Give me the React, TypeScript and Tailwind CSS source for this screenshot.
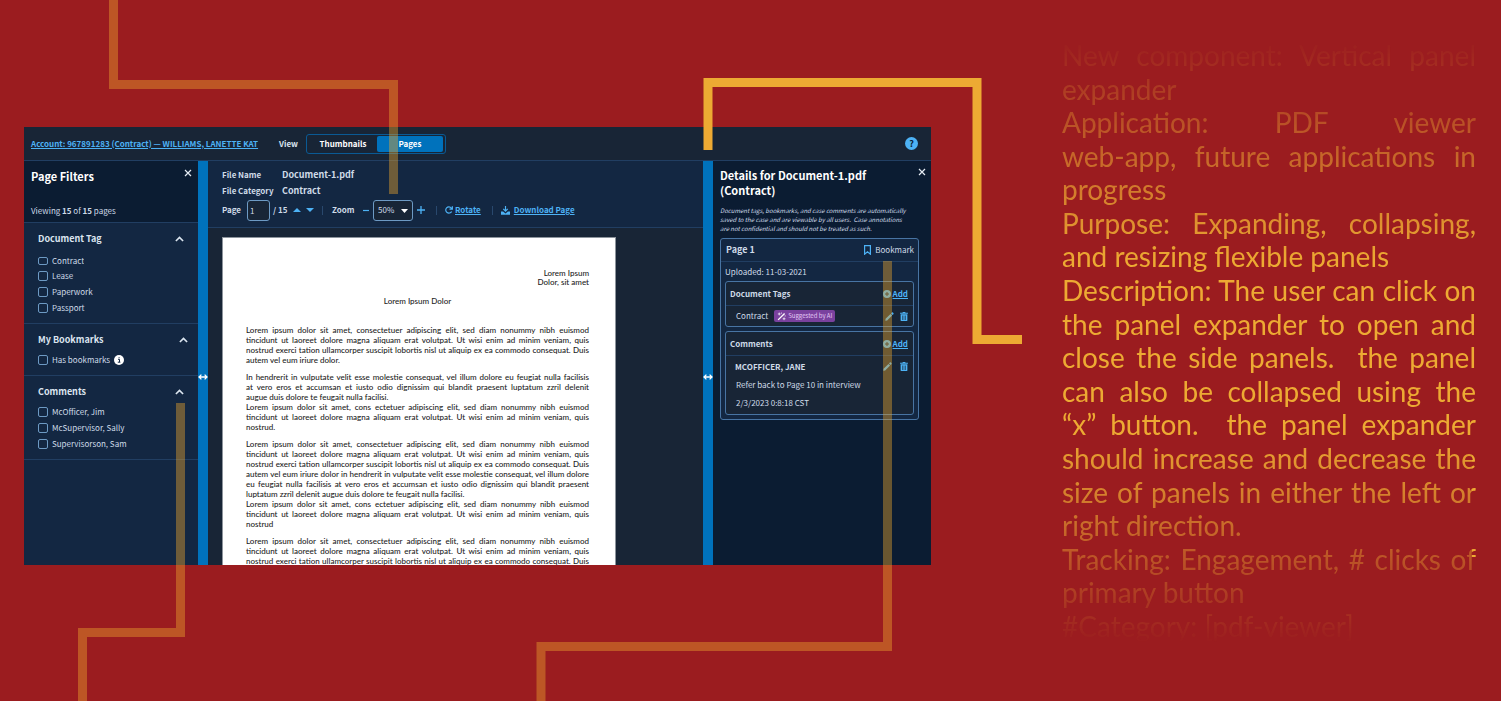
import { ReactNode } from "react";

const uiFont = "font-['Noto_Sans_CJK_SC','Noto_Sans',sans-serif]";
const copyFont = "font-['Lato',sans-serif]";

function Chevron() {
  return (
    <svg viewBox="0 0 10 6" className="h-[6px] w-[9px]" fill="none" stroke="#dce6f0" strokeWidth="1.8">
      <path d="M1 5.2 5 1.2 9 5.2" />
    </svg>
  );
}

function Close({ label }: { label: string }) {
  return (
    <button aria-label={label} className="flex size-[8px] items-center justify-center">
      <svg viewBox="0 0 8 8" className="size-[8px]" fill="none" stroke="#e6edf5" strokeWidth="1.2">
        <path d="M1 1 7 7M7 1 1 7" />
      </svg>
    </button>
  );
}

function Check({ label, children }: { label: string; children?: ReactNode }) {
  return (
    <label className="flex h-4 items-center gap-1 text-[8px] leading-4 text-[#cfdbe8]">
      <input type="checkbox" className="size-[10px] shrink-0 appearance-none rounded-[2px] border border-[#6d9ac4]" />
      {label}
      {children}
    </label>
  );
}

function FilterGroup({ title, inset, children }: { title: string; inset?: boolean; children: ReactNode }) {
  return (
    <section className="border-b border-[#213e62] pr-[10px] pb-[7px] pl-[14px]">
      <button className={`flex h-[32px] w-full items-center justify-between text-[9px] font-bold text-[#dbe5f0] ${inset ? "" : "pr-1"}`}>
        {title}
        <Chevron />
      </button>
      {children}
    </section>
  );
}

function Divider({ bar }: { bar: string }) {
  return (
    <button aria-label={bar} className="flex w-[10px] shrink-0 cursor-col-resize items-center justify-center bg-[#0072bc] pt-7">
      <svg viewBox="0 0 10 8" className="h-[8px] w-[10px]" fill="none" stroke="#fff" strokeWidth="1.3">
        <path d="M1.2 4H8.8M3.4 1.6 1 4 3.4 6.4M6.6 1.6 9 4 6.6 6.4" />
      </svg>
    </button>
  );
}

function Pencil() {
  return (
    <button aria-label="Edit">
      <svg viewBox="0 0 16 16" className="size-[9px]" fill="#4db2f5">
        <path d="M1 12.2 9.8 3.4 12.6 6.2 3.8 15 .6 15.4zM10.7 2.5l1.4-1.4a1.4 1.4 0 0 1 2 0l.8.8a1.4 1.4 0 0 1 0 2l-1.4 1.4z" />
      </svg>
    </button>
  );
}

function Trash() {
  return (
    <button aria-label="Delete">
      <svg viewBox="0 0 14 16" className="h-[9px] w-[8px]" fill="#4db2f5">
        <path
          fillRule="evenodd"
          d="M5 0h4l.8 1.3H14v1.9H0V1.3h4.2zM1 4.2h12V14.500a1.500 1.500 0 0 1-1.500 1.500h-9A1.500 1.500 0 0 1 1 14.500zM3.700 6v8h1V6zM6.500 6v8h1V6zM9.300 6v8h1V6z"
        />
      </svg>
    </button>
  );
}

function AddLink() {
  return (
    <a href="#add" className="flex items-center gap-[2px] text-[8px] font-bold text-[#4db2f5]">
      <svg viewBox="0 0 16 16" className="size-[8px]">
        <circle cx="8" cy="8" r="8" fill="#4db2f5" />
        <path d="M8 4v8M4 8h8" stroke="#182536" strokeWidth="2" />
      </svg>
      <span className="underline">Add</span>
    </a>
  );
}

function Card({ title, children }: { title: string; children: ReactNode }) {
  return (
    <section className="rounded-[3px] border border-[#4874a3] bg-[#182536]">
      <div className="flex h-6 items-center justify-between border-b border-[#213e62] pr-[5px] pl-1">
        <h4 className="text-[8px] font-bold">{title}</h4>
        <AddLink />
      </div>
      {children}
    </section>
  );
}

const j = true;
type Line = [string, boolean?];

const opening: Line[] = [
  ["Lorem ipsum dolor sit amet, consectetuer adipiscing elit, sed diam nonummy nibh euismod", j],
  ["tincidunt ut laoreet dolore magna aliquam erat volutpat. Ut wisi enim ad minim veniam, quis", j],
  ["nostrud exerci tation ullamcorper suscipit lobortis nisl ut aliquip ex ea commodo consequat. Duis", j],
];
const repeat: Line[] = [
  ["Lorem ipsum dolor sit amet, cons ectetuer adipiscing elit, sed diam nonummy nibh euismod", j],
  ["tincidunt ut laoreet dolore magna aliquam erat volutpat. Ut wisi enim ad minim veniam, quis", j],
];
const paragraphs: Line[][] = [
  [...opening, ["autem vel eum iriure dolor."]],
  [
    ["In hendrerit in vulputate velit esse molestie consequat, vel illum dolore eu feugiat nulla facilisis", j],
    ["at vero eros et accumsan et iusto odio dignissim qui blandit praesent luptatum zzril delenit", j],
    ["augue duis dolore te feugait nulla facilisi."],
    ...repeat,
    ["nostrud."],
  ],
  [
    ...opening,
    ["autem vel eum iriure dolor in hendrerit in vulputate velit esse molestie consequat, vel illum dolore", j],
    ["eu feugiat nulla facilisis at vero eros et accumsan et iusto odio dignissim qui blandit praesent", j],
    ["luptatum zzril delenit augue duis dolore te feugait nulla facilisi."],
    ...repeat,
    ["nostrud"],
  ],
  opening,
];

const notes: Line[] = [
  ["New component: Vertical panel", j],
  ["expander"],
  ["Application: PDF viewer", j],
  ["web-app, future applications in", j],
  ["progress"],
  ["Purpose: Expanding, collapsing,", j],
  ["and resizing flexible panels"],
  ["Description: The user can click on", j],
  ["the panel expander to open and", j],
  ["close the side panels.\u00a0 the panel", j],
  ["can also be collapsed using the", j],
  ["“x” button.\u00a0 the panel expander", j],
  ["should increase and decrease the", j],
  ["size of panels in either the left or", j],
  ["right direction."],
  ["Tracking: Engagement, # clicks of", j],
  ["primary button"],
  ["#Category: [pdf-viewer]"],
];

function TextLine({ line }: { line: Line }) {
  return <span className={`block whitespace-nowrap ${line[1] ? "[text-align-last:justify]" : ""}`}>{line[0]}</span>;
}

function Filters() {
  return (
    <aside className="w-[174px] shrink-0 bg-[#132742]">
      <header className="h-[62px] border-b border-[#213e62] bg-[#0b1c32] pr-[6px] pl-[7px]">
        <div className="flex h-[42px] items-start justify-between pt-2">
          <h2 className="text-[11px] leading-[15px] font-bold text-white">Page Filters</h2>
          <Close label="Close page filters" />
        </div>
        <p className="text-[8px] leading-4 text-[#cfdbe8]">
          Viewing <b>15</b> of <b>15</b> pages
        </p>
      </header>
      <FilterGroup title="Document Tag">
        <label className="mt-[2px] mb-[3px] flex h-2 items-center gap-1 text-[8px] leading-[6px] text-[#cfdbe8]">
          <input type="checkbox" className="h-2 w-[10px] appearance-none rounded-[2px] border border-[#6d9ac4]" />
          <span className="h-[6px] overflow-hidden">Contract</span>
        </label>
        <Check label="Lease" />
        <Check label="Paperwork" />
        <Check label="Passport" />
      </FilterGroup>
      <FilterGroup title="My Bookmarks" inset>
        <div className="-mt-1">
          <Check label="Has bookmarks">
            <svg viewBox="0 0 10 10" className="size-[10px]">
              <circle cx="5" cy="5" r="5" fill="#fff" />
              <path d="M4 4.300h1.500V7M3.800 7.200h2.600M4.600 2.700h1" stroke="#132742" strokeWidth="1" fill="none" />
            </svg>
          </Check>
        </div>
      </FilterGroup>
      <FilterGroup title="Comments">
        <div className="-mt-1">
          <Check label="McOfficer, Jim" />
          <Check label="McSupervisor, Sally" />
          <Check label="Supervisorson, Sam" />
        </div>
      </FilterGroup>
    </aside>
  );
}

function Toolbar() {
  return (
    <div className="h-[67px] border-b border-[#213e62] bg-[#132742] px-[14px] pt-[6px] text-[8px] font-bold text-[#cfdbe8]">
      <dl className="grid grid-cols-[60px_1fr] items-center leading-4">
        <dt>File Name</dt>
        <dd className="text-[9px]">Document-1.pdf</dd>
        <dt>File Category</dt>
        <dd className="text-[9px]">Contract</dd>
      </dl>
      <div className="flex h-[22px] items-center">
        <label htmlFor="page" className="w-[25px]">
          Page
        </label>
        <input
          id="page"
          defaultValue="1"
          className="h-[21px] w-[23px] rounded-[3px] border border-[#6d9ac4] bg-[#182536] pl-[2px] font-normal"
        />
        <span className="ml-[3px] w-[20px]">/ 15</span>
        <button aria-label="Previous page">
          <svg viewBox="0 0 8 4" className="h-1 w-2" fill="#4db2f5">
            <path d="M0 4 4 0 8 4z" />
          </svg>
        </button>
        <button aria-label="Next page" className="ml-[5px]">
          <svg viewBox="0 0 8 4" className="h-1 w-2" fill="#4db2f5">
            <path d="M0 0 4 4 8 0z" />
          </svg>
        </button>
        <span className="ml-2 h-[9px] w-px bg-[#29486d]" />
        <label htmlFor="zoom" className="ml-[9px] w-[31px]">
          Zoom
        </label>
        <button aria-label="Zoom out" className="flex h-4 w-[7px] items-center">
          <svg viewBox="0 0 7 7" className="size-[7px]" stroke="#4db2f5" strokeWidth="1.2">
            <path d="M0 3.500h6" />
          </svg>
        </button>
        <div className="relative ml-[3px]">
          <select
            id="zoom"
            className="block h-[21px] w-[40px] appearance-none rounded-[3px] border border-[#6d9ac4] bg-[#182536] pl-[4px] font-normal"
          >
            <option>50%</option>
            <option>100%</option>
          </select>
          <svg viewBox="0 0 7 4" className="pointer-events-none absolute top-[9px] right-[5px] h-1 w-[7px]" fill="#fff">
            <path d="M0 0 3.500 4 7 0z" />
          </svg>
        </div>
        <button aria-label="Zoom in" className="ml-[4px]">
          <svg viewBox="0 0 8 8" className="size-2" stroke="#4db2f5" strokeWidth="1.300">
            <path d="M0 4h8M4 0v8" />
          </svg>
        </button>
        <span className="ml-[11px] h-[9px] w-px bg-[#29486d]" />
        <button className="ml-[8px] flex items-center gap-[2px] text-[#4db2f5]">
          <svg viewBox="0 0 10 10" className="size-[8px]" fill="none" stroke="#4db2f5" strokeWidth="1.500">
            <path d="M8.300 6.800A3.900 3.900 0 1 1 7.900 2.600L9 3.800M9.200.4v3.600H5.600" />
          </svg>
          <span className="underline">Rotate</span>
        </button>
        <span className="ml-[11px] h-[9px] w-px bg-[#29486d]" />
        <a href="#download" className="ml-[8px] flex items-center gap-[4px] text-[#4db2f5]">
          <svg viewBox="0 0 10 10" className="size-[9px]">
            <path d="M5 0v5.500M2.500 3.200 5 5.700 7.500 3.200" fill="none" stroke="#4db2f5" strokeWidth="1.300" />
            <path d="M0 6h2.300L5 8.400 7.700 6H10v3.800H0z" fill="#4db2f5" />
          </svg>
          <span className="underline">Download Page</span>
        </a>
      </div>
    </div>
  );
}

function Details() {
  return (
    <aside className="w-[218px] shrink-0 bg-[#0b1c32] pr-[12px] pl-[7px] text-[#cfdbe8]">
      <div className="-mr-[7px] flex items-start justify-between pt-[7px]">
        <h2 className="text-[11px] leading-[15px] font-bold text-white">
          Details for Document-1.pdf
          <br />
          (Contract)
        </h2>
        <Close label="Close details" />
      </div>
      <p className="mt-2 text-[6px] leading-[9px] whitespace-nowrap italic">
        Document tags, bookmarks, and case comments are automatically
        <br />
        saved to the case and are viewable by all users.&nbsp; Case annotations
        <br />
        are not confidential and should not be treated as such.
      </p>
      <section className="mt-[5px] rounded-[3px] border border-[#4874a3] bg-[#132742] pb-1">
        <div className="flex h-[23px] items-center justify-between border-b border-[#213e62] pr-1 pl-[5px]">
          <h3 className="text-[9px] font-bold">Page 1</h3>
          <button className="flex items-center gap-1 text-[8px]">
            <svg viewBox="0 0 7 10" className="h-[10px] w-[7px]" fill="none" stroke="#4db2f5" strokeWidth="1.200">
              <path d="M.600.600h5.800v8.600L3.500 6.800.600 9.200z" />
            </svg>
            Bookmark
          </button>
        </div>
        <p className="pl-1 text-[8px] leading-[19px]">Uploaded: 11-03-2021</p>
        <div className="flex flex-col gap-1 px-1">
          <Card title="Document Tags">
            <div className="flex h-5 items-center pr-[5px] pl-[10px] text-[8px]">
              Contract
              <span className="ml-[6px] flex h-3 items-center gap-[2px] rounded-[2px] bg-[#7a419e] px-[3px] text-[6px] leading-3 text-[#e3c8f5]">
                <svg viewBox="0 0 16 16" className="size-[9px]" fill="none" stroke="#fff">
                  <path d="M2 14 13.500 2.500" strokeWidth="2.400" />
                  <path d="M4 1v5M1.500 3.500h5M12.500 9.500v5M10 12h5M8 1v2M14.500 6v2" strokeWidth="1.300" />
                </svg>
                Suggested by AI
              </span>
              <span className="ml-auto flex gap-[6px]">
                <Pencil />
                <Trash />
              </span>
            </div>
          </Card>
          <Card title="Comments">
            <div className="flex h-[21px] items-center justify-between pr-[5px] pl-[9px]">
              <b className="text-[8px]">MCOFFICER, JANE</b>
              <span className="flex gap-2">
                <Pencil />
                <Trash />
              </span>
            </div>
            <p className="pl-[10px] text-[8px] leading-[15px]">Refer back to Page 10 in interview</p>
            <p className="pl-[10px] text-[8px] leading-[22px]">2/3/2023 0:8:18 CST</p>
          </Card>
        </div>
      </section>
    </aside>
  );
}

function Connectors() {
  return (
    <svg className="pointer-events-none absolute top-0 left-0 h-[701px] w-[1501px]" viewBox="0 0 1501 701" fill="none" strokeWidth="9">
      <g stroke="#eda82e" strokeOpacity="0.42">
        <path d="M113.500 0V84.500H393.500V194" />
        <path d="M180.500 403V632.500H82.500V701" />
        <path d="M887.500 261V646.500H541V701" />
      </g>
      <path d="M708 150V82.500H977V339.500H1022" stroke="#edaa33" />
    </svg>
  );
}

export default function App() {
  return (
    <div className={`relative flex min-h-screen items-start gap-[131px] overflow-hidden bg-[#9b1c1f] pr-[25px] pl-6 ${uiFont}`}>
      <main className="mt-[127px] flex h-[438px] min-w-0 flex-1 flex-col overflow-hidden bg-[#182536]">
        <header className="flex h-[34px] shrink-0 items-center border-b border-[#213e62] pr-[13px] pl-[7px] text-[8px] font-bold">
          <a href="#account" className="whitespace-nowrap text-[#4db2f5] underline">
            Account: 967891283 (Contract) — WILLIAMS, LANETTE KAT
          </a>
          <span className="ml-[21px] text-[#dbe5f0]">View</span>
          <div className="ml-2 flex h-[20px] w-[140px] items-center rounded-[3px] border border-[#0a5a94] px-[2px] text-white">
            <button className="h-4 flex-1">Thumbnails</button>
            <button className="h-4 w-[66px] rounded-[2px] bg-[#0072bc]">Pages</button>
          </div>
          <button
            aria-label="Help"
            className="ml-auto flex size-[13px] items-center justify-center rounded-full bg-[#4db2f5] text-[9px] leading-[13px] text-[#0b1c32]"
          >
            ?
          </button>
        </header>
        <div className="flex min-h-0 flex-1">
          <Filters />
          <Divider bar="Resize filters panel" />
          <div className="min-w-0 flex-1 overflow-hidden">
            <Toolbar />
            <article
              className={`mt-[9px] ml-[14px] w-[394px] border border-[#8d949c] bg-white pt-[31px] pr-[26px] pb-10 pl-[23px] text-[8px] leading-[10px] font-medium text-[#1c1c1c] ${copyFont}`}
            >
              <p className="text-right leading-[9px]">
                Lorem Ipsum
                <br />
                Dolor, sit amet
              </p>
              <p className="mt-[9px] text-center">Lorem Ipsum Dolor</p>
              <div className="mt-[19px] flex flex-col gap-[7px]">
                {paragraphs.map((lines, i) => (
                  <p key={i}>
                    {lines.map((line, n) => (
                      <TextLine key={n} line={line} />
                    ))}
                  </p>
                ))}
              </div>
            </article>
          </div>
          <Divider bar="Resize details panel" />
          <Details />
        </div>
      </main>
      <aside
        className={`mt-[39px] flex h-[604px] w-[414px] shrink-0 flex-col justify-between text-[28px] leading-[33px] text-[#edaa33] [mask-image:linear-gradient(transparent,black_37%,black_65%,transparent),linear-gradient(black,black)] [mask-position:0_0,100%_410px] [mask-repeat:no-repeat] [mask-size:100%_100%,4px_110px] ${copyFont}`}
      >
        {notes.map((line, i) => (
          <TextLine key={i} line={line} />
        ))}
      </aside>
      <Connectors />
    </div>
  );
}
